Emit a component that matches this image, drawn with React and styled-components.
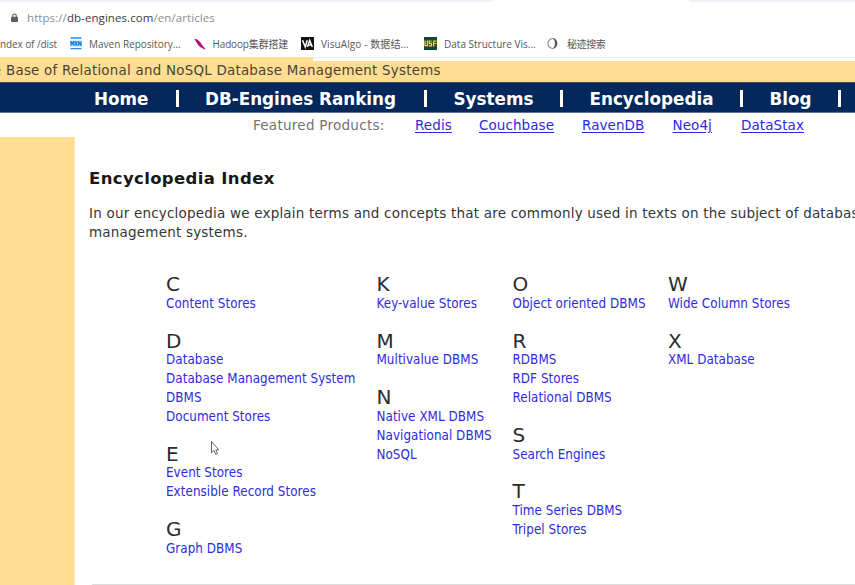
import React from "react";
import styled, { createGlobalStyle } from "styled-components";

const verdana = `Verdana, "DejaVu Sans", sans-serif`;
const tahoma = `"DejaVu Sans Condensed", "DejaVu Sans", sans-serif`;
const chrome = `"Open Sans", "Noto Sans CJK SC", sans-serif`;

const GlobalStyle = createGlobalStyle`
  * { box-sizing: border-box; }
  html, body { margin: 0; background: #fff; overflow: hidden; }
`;

const Page = styled.div`
  display: flex;
  flex-direction: column;
  width: 855px;
  height: 585px;
  overflow: hidden;
  background: #fff;
`;

const TabStrip = styled.div`
  display: flex;
  justify-content: space-between;
  height: 3px;
`;
const TabPiece = styled.div`
  width: ${(p) => p.$width}px;
  height: ${(p) => p.$height}px;
  background: #f0f2f9;
  border-radius: ${(p) => (p.$right ? "0 0 0 4px" : "0 0 4px 0")};
`;

const AddressBar = styled.div`
  display: flex;
  align-items: center;
  height: 30px;
  padding-left: 11px;
`;
const Url = styled.div`
  margin-left: 9px;
  font: 11.5px/16px ${chrome};
  letter-spacing: 0.08px;
  color: #8b8e92;
  white-space: pre;
`;
const Host = styled.span`
  color: #3a3d42;
`;

const Bookmarks = styled.div`
  display: flex;
  height: 24px;
  font: 10px/20px ${chrome};
  color: #55585c;
  white-space: pre;
`;
const Bookmark = styled.div`
  display: flex;
  align-items: center;
  gap: ${(p) => p.$gap || 0}px;
  width: ${(p) => p.$width}px;
  height: 21px;
  flex: none;
  letter-spacing: ${(p) => p.$tracking || 0}px;
`;

const TopBanner = styled.div`
  display: flex;
  flex-direction: column;
  height: 25px;
  flex: none;
  background: #ffdd92;
`;
const ToolbarEdge = styled.div`
  align-self: flex-end;
  width: 542px;
  height: 4px;
  flex: none;
  background: #fff;
  border-top: 1px solid #ececf4;
`;
const BannerText = styled.div`
  display: flex;
  font: 13.4px/19px ${verdana};
  letter-spacing: 0.25px;
  color: #4b4432;
  white-space: pre;
`;
const ClippedLetter = styled.span`
  display: flex;
  justify-content: flex-end;
  width: 1px;
  margin-right: 5px;
  overflow: hidden;
  letter-spacing: 0;
`;

const Nav = styled.nav`
  display: flex;
  height: 31px;
  flex: none;
  padding-left: 94px;
  background: #04285c;
  border-top: 1px solid #3d4a5e;
  border-bottom: 1px solid #5f7192;
  font: bold 16.8px/32px ${verdana};
  color: #fff;
`;
const NavItem = styled.div`
  display: flex;
  flex: none;
  justify-content: space-between;
  width: ${(p) => p.$width}px;
  white-space: nowrap;
`;
const Divider = styled.i`
  width: 3px;
  height: 17px;
  margin: 7px 26.5px 0 0;
  background: #fff;
`;

const Featured = styled.div`
  display: flex;
  height: 24px;
  flex: none;
  padding-left: 253px;
  font: 13.5px/25px ${verdana};
`;
const FeaturedLabel = styled.span`
  width: 162px;
  letter-spacing: 0.27px;
  color: #74716f;
`;
const FeaturedItem = styled.div`
  width: ${(p) => p.$width}px;
`;
const FeaturedLink = styled.a`
  color: #2d2ae2;
  letter-spacing: 0.08px;
  text-decoration: underline;
  text-underline-offset: 2px;
`;

const Body = styled.div`
  display: flex;
  flex: 1;
  min-height: 0;
`;
const Sidebar = styled.aside`
  width: 75px;
  flex: none;
  background: #ffdd92;
  border-right: 1px solid #ffe9b9;
`;
const Main = styled.main`
  display: flex;
  flex-direction: column;
  width: 860px;
  flex: none;
  padding: 32px 0 0 14px;
`;
const Title = styled.h1`
  margin: 0;
  font: bold 16.5px/20px ${verdana};
  letter-spacing: 0.36px;
  color: #181818;
`;
const Intro = styled.p`
  margin: 15px 0 0;
  font: 13.5px/19px ${verdana};
  letter-spacing: 0.2px;
  color: #353535;
  white-space: nowrap;
`;

const Index = styled.div`
  display: grid;
  grid-template-columns: 210.5px 136px 155.5px 180px;
  height: 308px;
  margin-top: 34px;
  padding-left: 77px;
`;
const Column = styled.div`
  display: flex;
  flex-direction: column;
  gap: 18.85px;
`;
const Group = styled.section`
  display: flex;
  flex-direction: column;
  padding-right: 10px;
`;
const Letter = styled.h2`
  margin: 0 0 2px;
  font: 20px/16.85px ${verdana};
  color: #2c2c2c;
`;
const Term = styled.a`
  font: 13.3px/18.85px ${tahoma};
  letter-spacing: 0.05px;
  color: #2f2be0;
`;
const Rule = styled.div`
  flex: none;
  height: 1px;
  margin-left: 3px;
  background: #dcdcdc;
`;
const Pointer = styled.svg`
  position: absolute;
  left: 210px;
  top: 440px;
`;

const nav = [
  ["Home", 111],
  ["DB-Engines Ranking", 248.5],
  ["Systems", 136],
  ["Encyclopedia", 180],
  ["Blog", 98],
];
const products = [
  ["Redis", 64],
  ["Couchbase", 103],
  ["RavenDB", 90.5],
  ["Neo4j", 68.5],
  ["DataStax", 80],
];
const columns = [
  [
    ["C", ["Content Stores"]],
    ["D", ["Database", "Database Management System DBMS", "Document Stores"]],
    ["E", ["Event Stores", "Extensible Record Stores"]],
    ["G", ["Graph DBMS"]],
  ],
  [
    ["K", ["Key-value Stores"]],
    ["M", ["Multivalue DBMS"]],
    ["N", ["Native XML DBMS", "Navigational DBMS", "NoSQL"]],
  ],
  [
    ["O", ["Object oriented DBMS"]],
    ["R", ["RDBMS", "RDF Stores", "Relational DBMS"]],
    ["S", ["Search Engines"]],
    ["T", ["Time Series DBMS", "Tripel Stores"]],
  ],
  [
    ["W", ["Wide Column Stores"]],
    ["X", ["XML Database"]],
  ],
];

const LockIcon = () => (
  <svg width="7" height="10" viewBox="0 0 7 10">
    <path d="M1.7 4.5V2.8a1.8 1.8 0 0 1 3.6 0v1.7" fill="none" stroke="#5a5d61" strokeWidth="1.1" />
    <rect x="0" y="3.8" width="7" height="5.2" rx=".7" fill="#5a5d61" />
  </svg>
);
const MavenIcon = () => (
  <svg width="12" height="13" viewBox="0 0 12 13">
    <path d="M.5 1h11M.5 11.7h11" stroke="#2f8ae0" strokeWidth="1.3" />
    <path d="M0 3.5h12v6H0z" fill="#b9dcfa" />
    <path d="M1 8.8V4.2l1.4 2.6 1.4-2.6v4.6M5 4.2l2.3 4.6M7.3 4.2L5 8.8M8.6 8.8V4.2L11 8.8V4.2" fill="none" stroke="#1779dd" strokeWidth="1.1" />
  </svg>
);
const FeatherIcon = () => (
  <svg width="12" height="12" viewBox="0 0 12 12">
    <path d="M.3 1.2C2.5.5 4.5 2 6.3 4.3L9 8.2l2.5 2.7-1 .5C7.5 9.7 6 9.5 4.8 7.8 3 6 2.6 3.5.3 1.2z" fill="#c3127c" />
    <path d="M2 2.2l6.5 6.6" stroke="#6f1d78" strokeWidth=".9" />
  </svg>
);
const VisuAlgoIcon = () => (
  <svg width="13" height="13" viewBox="0 0 13 13">
    <rect width="13" height="13" fill="#111" />
    <path d="M1.5 3.2L4.3 10l1.9-6.8M6.4 10l2.3-6.5L11.3 10M7.3 8h3.2" fill="none" stroke="#fff" strokeWidth="1.5" />
  </svg>
);
const UsfIcon = () => (
  <svg width="13" height="13" viewBox="0 0 13 13">
    <rect width="13" height="13" fill="#0d4a35" />
    <rect y="3.5" width="13" height="6.5" fill="#37501b" />
    <path d="M1 3.5v5.2h2.4V3.5M7.6 4H5.2v2.4h2.3v2.5H4.8M9.6 9.6V4H12.7M9.6 6.5h2.7" fill="none" stroke="#e8dd2b" strokeWidth="1.2" />
  </svg>
);
const MijiIcon = () => (
  <svg width="11" height="13" viewBox="0 0 11 13">
    <path d="M5.5 1.6A4.6 4.8 0 0 0 5.5 11.2" fill="none" stroke="#8a8a8a" strokeWidth="1.1" />
    <path d="M4.8.8C8 1 10.4 3.3 10.4 6.4S8 11.8 4.8 12c2.4-1.5 3.1-3.3 3.1-5.6S7.2 2.3 4.8.8z" fill="#5a5a5a" />
  </svg>
);

export default function App() {
  return (
    <Page>
      <GlobalStyle />
      <TabStrip>
        <TabPiece $width={493} $height={2} />
        <TabPiece $width={166} $height={2} $right />
      </TabStrip>
      <AddressBar>
        <LockIcon />
        <Url>
          https://<Host>db-engines.com</Host>/en/articles
        </Url>
      </AddressBar>
      <Bookmarks>
        <Bookmark $width={70} $tracking={-0.1}>ndex of /dist</Bookmark>
        <Bookmark $width={124} $gap={7}><MavenIcon />Maven Repository...</Bookmark>
        <Bookmark $width={107} $gap={6.5} $tracking={-0.15}><FeatherIcon />Hadoop集群搭建</Bookmark>
        <Bookmark $width={123} $gap={7} $tracking={0.1}><VisuAlgoIcon />VisuAlgo - 数据结...</Bookmark>
        <Bookmark $width={123} $gap={7}><UsfIcon />Data Structure Vis...</Bookmark>
        <Bookmark $width={90} $gap={9} $tracking={-0.4}><MijiIcon />秘迹搜索</Bookmark>
      </Bookmarks>
      <TopBanner>
        <ToolbarEdge />
        <BannerText>
          <ClippedLetter>e</ClippedLetter>
          Base of Relational and NoSQL Database Management Systems
        </BannerText>
      </TopBanner>
      <Nav>
        {nav.map(([label, width]) => (
          <NavItem key={label} $width={width}>
            {label}
            <Divider />
          </NavItem>
        ))}
      </Nav>
      <Featured>
        <FeaturedLabel>Featured Products:</FeaturedLabel>
        {products.map(([name, width]) => (
          <FeaturedItem key={name} $width={width}>
            <FeaturedLink>{name}</FeaturedLink>
          </FeaturedItem>
        ))}
      </Featured>
      <Body>
        <Sidebar />
        <Main>
          <Title>Encyclopedia Index</Title>
          <Intro>
            In our encyclopedia we explain terms and concepts that are commonly used in texts on the subject of database
            <br />
            management systems.
          </Intro>
          <Index>
            {columns.map((groups, i) => (
              <Column key={i}>
                {groups.map(([letter, terms]) => (
                  <Group key={letter}>
                    <Letter>{letter}</Letter>
                    {terms.map((t) => (
                      <Term key={t}>{t}</Term>
                    ))}
                  </Group>
                ))}
              </Column>
            ))}
          </Index>
          <Rule />
        </Main>
      </Body>
      <Pointer width="10" height="16" viewBox="0 0 10 16">
        <path d="M1.5 1.5v11.3l2.5-2.3 1.8 3.9 1.7-.8-1.7-3.7h3z" fill="#fff" stroke="#555" strokeWidth=".9" />
      </Pointer>
    </Page>
  );
}
